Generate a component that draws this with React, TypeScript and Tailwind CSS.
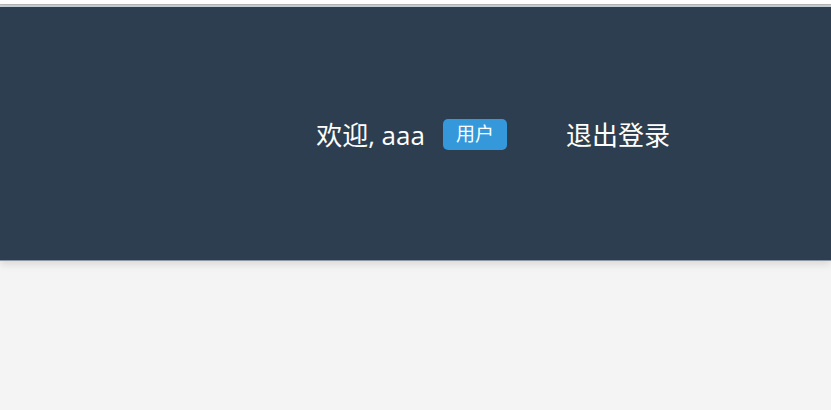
export default function App() {
  return (
    <div className="min-h-screen bg-[#f4f4f4]" style={{ fontFamily: '"Open Sans", "Noto Sans CJK SC", sans-serif' }}>
      {/* top edge */}
      <div className="h-[4px] bg-white" />
      <div className="h-px bg-[#b4b4b4]" />
      <div className="h-[2px] bg-[#c5cdd8]" />

      {/* header */}
      <header className="relative z-10 flex h-[254px] items-center justify-end border-b border-[#8c97a3] bg-[#2c3e50] pr-[161px] shadow-[0_3px_8px_rgba(0,0,0,0.12)]">
        <div className="flex items-center pt-[2px]">
          <span className="text-[26px] leading-none text-white">欢迎, aaa</span>
          <span className="ml-[18px] flex h-[31px] items-center rounded-[5px] bg-[#3498db] px-[13px] text-[19px] leading-none text-white">
            用户
          </span>
          <button className="ml-[59px] text-[26px] leading-none text-white">退出登录</button>
        </div>
      </header>

      <main className="h-[150px]" />
    </div>
  );
}
